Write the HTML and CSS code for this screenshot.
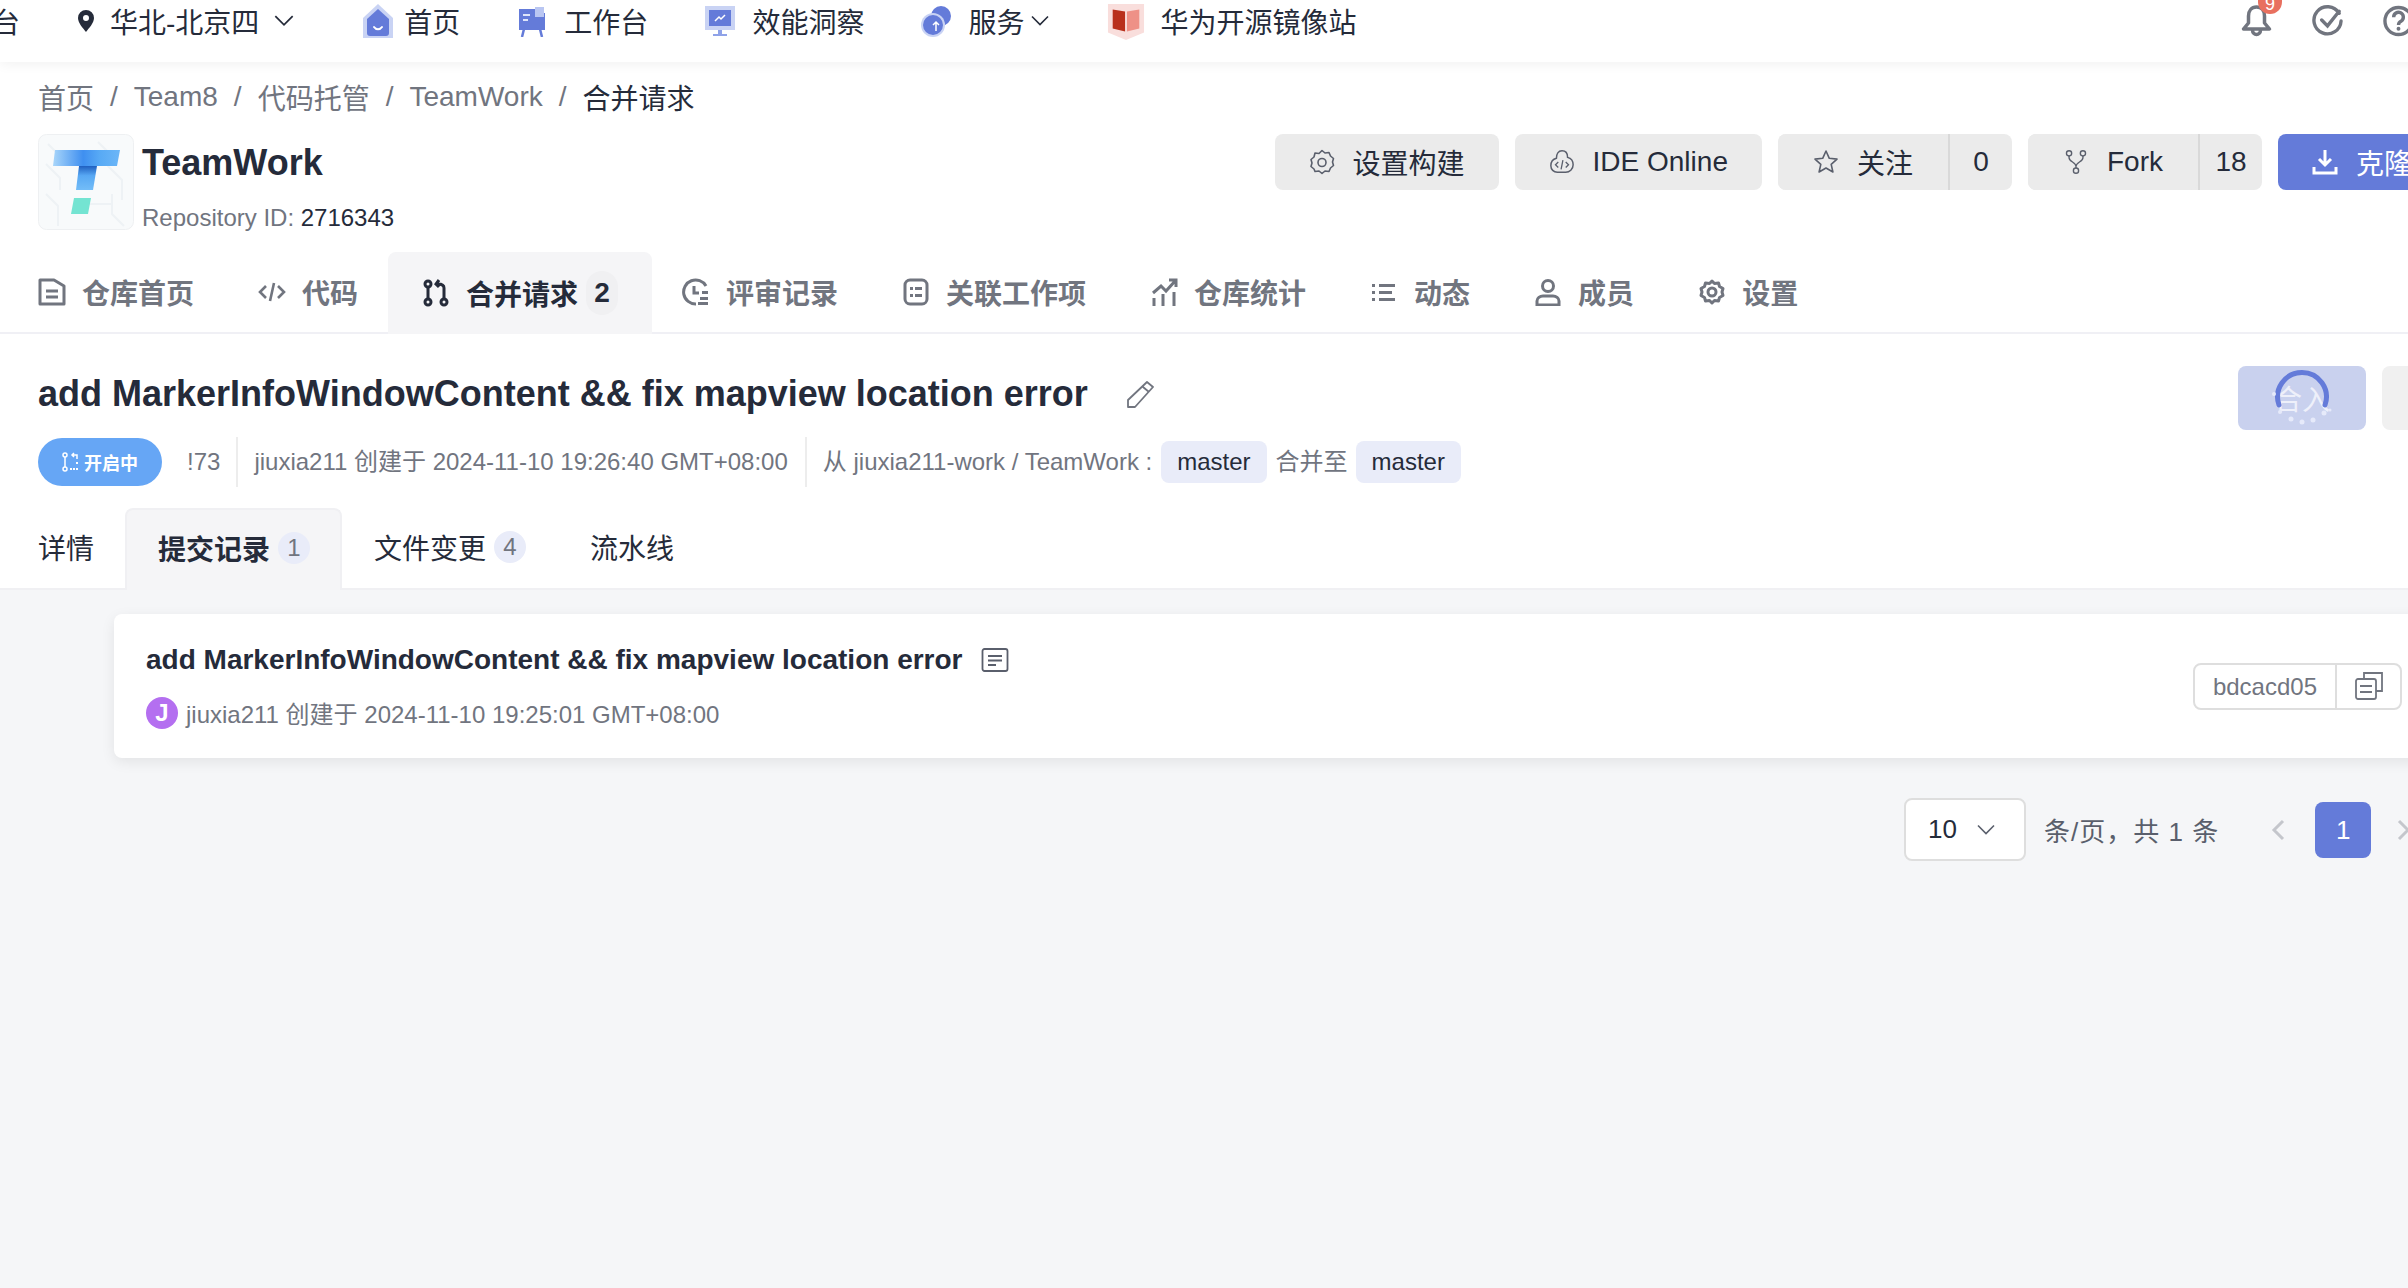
FILE: index.html
```html
<!DOCTYPE html>
<html lang="zh-CN">
<head>
  <meta charset="UTF-8" />
  <title>合并请求</title>
  <link rel="stylesheet" href="styles.css">
</head>
<body>
  <div class="page">
    <header class="topbar">
      <span class="cut-title">台</span>
      <div class="region">
        <svg class="ico-pin" viewBox="0 0 16 22"><path fill="#252b3a" fill-rule="evenodd" d="M8 0a8 8 0 0 1 8 8c0 5-5 10-8 14C5 18 0 13 0 8a8 8 0 0 1 8-8zm0 5a3 3 0 1 0 0 6 3 3 0 0 0 0-6z"/></svg>
        <span>华北-北京四</span>
        <svg class="chev" viewBox="0 0 20 12"><path d="M2 2l8 8 8-8"/></svg>
      </div>
      <a class="nav-item nav-home">
        <svg class="ico-wide" viewBox="0 0 40 36"><path fill="#c9d3f4" d="M20 1l15 14v20H5V15z"/><path fill="#647bd9" d="M20 6l11 10v14a3 3 0 0 1-3 3H12a3 3 0 0 1-3-3V16z"/><path fill="none" stroke="#fff" stroke-width="2" stroke-linecap="round" d="M16 24c2 3 6 3 8 0"/></svg>
        <span>首页</span>
      </a>
      <a class="nav-item">
        <svg class="ico-nav" viewBox="0 0 32 32"><path fill="none" stroke="#647bd9" stroke-width="2.5" d="M8 24l-2 8M24 24l2 8"/><path fill="#647bd9" d="M3 4h16v4h10v17H3z"/><path fill="#b9c6f2" d="M19 2h9v10h-9z"/><path fill="#dfe5fa" d="M7 9h7v2H7zM7 14h5v2H7z"/></svg>
        <span>工作台</span>
      </a>
      <a class="nav-item">
        <svg class="ico-nav" viewBox="0 0 32 32"><path fill="#c9d3f4" d="M1 1h30v24H1z"/><path fill="#647bd9" d="M5 5h22v16H5z"/><path fill="#8fa2e8" d="M14 25h4v4h5v2H9v-2h5z"/><path fill="none" stroke="#fff" stroke-width="1.5" d="M11 16l4-4 2 2 4-4"/></svg>
        <span>效能洞察</span>
      </a>
      <a class="nav-item nav-tight">
        <svg class="ico-nav" viewBox="0 0 32 32"><circle cx="21" cy="11" r="10" fill="#647bd9"/><circle cx="13" cy="20" r="12" fill="#c9d3f4"/><circle cx="13" cy="20" r="10" fill="#647bd9"/><path fill="none" stroke="#fff" stroke-width="1.5" d="M16 26v-9m-3 3l3-3 3 3"/></svg>
        <span>服务</span>
        <svg class="chev" viewBox="0 0 20 12"><path d="M2 2l8 8 8-8"/></svg>
      </a>
      <a class="nav-item nav-book">
        <svg class="ico-wide" viewBox="0 0 40 40"><path fill="#f9dedc" d="M1 2h38v30l-19 8-19-8z"/><path fill="#b9301c" d="M6 8l13 2v21L6 28z"/><path fill="#ee9187" d="M34 8l-13 2v21l13-3z"/></svg>
        <span>华为开源镜像站</span>
      </a>
      <div class="top-icons">
        <span class="bell">
          <svg class="ico-top" viewBox="0 0 30 32"><path fill="none" stroke="#71757f" stroke-width="3.500" stroke-linejoin="round" d="M15 2c5 0 8 4 8 9v7l5 6H2l5-6v-7c0-5 3-9 8-9zM11 25c0 6 8 6 8 0"/></svg>
          <b class="bell-badge">9</b>
        </span>
        <svg class="ico-top" viewBox="0 0 32 32"><path fill="none" stroke="#71757f" stroke-width="3.500" stroke-linecap="round" d="M28 8A14 14 0 1 0 30 16M10 15l6 6L28 6"/></svg>
        <svg class="ico-top" viewBox="0 0 32 32"><circle cx="16" cy="16" r="14" fill="none" stroke="#71757f" stroke-width="3.500"/><path fill="none" stroke="#71757f" stroke-width="3.500" d="M11 12a5 5 0 1 1 8 4c-2 1-3 2-3 4"/><circle cx="16" cy="24" r="2" fill="#71757f"/></svg>
      </div>
    </header>

    <section class="repo-head">
      <nav class="crumbs">
        <a>首页</a><i>/</i><a>Team8</a><i>/</i><a>代码托管</a><i>/</i><a>TeamWork</a><i>/</i><span>合并请求</span>
      </nav>
      <div class="repo-row">
        <svg class="repo-logo" viewBox="0 0 96 96">
          <rect x="0.5" y="0.5" width="95" height="95" rx="8" fill="#f8fafb" stroke="#eef0f2"/>
          <path fill="none" stroke="#eef2f5" stroke-width="2" d="M8 60l12 12v20M8 30l14 14v12M60 8l10 10v14l14 14v20M74 60v20l12 12M50 70h24M10 10l16 16"/>
          <defs>
            <linearGradient id="logoBar" x1="0" x2="1"><stop offset="0" stop-color="#a9d6fa"/><stop offset="0.45" stop-color="#3f8ff0"/><stop offset="0.7" stop-color="#58aaf5"/><stop offset="1" stop-color="#6cb6f7"/></linearGradient>
            <linearGradient id="logoStem" x1="0" x2="0" y1="0" y2="1"><stop offset="0" stop-color="#1f5fc0"/><stop offset="0.4" stop-color="#58a8f3"/><stop offset="1" stop-color="#73bdf8"/></linearGradient>
          </defs>
          <path fill="url(#logoBar)" d="M17 16h65l-3 16H15z"/>
          <path fill="url(#logoStem)" d="M41 32h18l-4 24H38z"/>
          <path fill="#74e4d2" d="M36 64h17l-3 16H33z"/>
        </svg>
        <div class="repo-info">
          <h1>TeamWork</h1>
          <p>Repository ID: <b>2716343</b></p>
        </div>
        <div class="repo-actions">
          <button class="btn">
            <svg class="ico-btn" viewBox="0 0 26 26"><path fill="none" stroke="#5a5f6c" stroke-width="1.6" stroke-linejoin="round" d="M13 1.5l3 2.5 4-.5 1.5 3.500 3 2.500-1 3.500 1 3.500-3 2.500-1.500 3.500-4-.5-3 2.500-3-2.500-4 .5L5 20l-3-2.500 1-3.500-1-3.500L5 8l1-4 4 .5z"/><circle cx="13" cy="13.500" r="4" fill="none" stroke="#5a5f6c" stroke-width="1.600"/></svg>
            设置构建
          </button>
          <button class="btn">
            <svg class="ico-btn" viewBox="0 0 28 28"><path fill="none" stroke="#5a5f6c" stroke-width="1.600" d="M14 2c4 0 6 3 6 7 4 1 6 4 6 8 0 5-4 8-8 8H9c-4 0-7-3-7-7 0-4 2-7 6-8 0-5 2-8 6-8z"/><path fill="none" stroke="#5a5f6c" stroke-width="1.400" d="M10 14l-3 3 3 3M18 14l3 3-3 3M15 12l-2 10"/></svg>
            IDE Online
          </button>
          <div class="btn-count">
            <button class="btn">
              <svg class="ico-btn" viewBox="0 0 26 26"><path fill="none" stroke="#5a5f6c" stroke-width="1.600" stroke-linejoin="round" d="M13 2l3.300 7.300 7.700.8-5.800 5.200 1.700 7.700-6.900-4-6.900 4 1.700-7.700L2 10.100l7.700-.8z"/></svg>
              关注
            </button>
            <span>0</span>
          </div>
          <div class="btn-count">
            <button class="btn">
              <svg class="ico-btn" viewBox="0 0 26 30"><g fill="none" stroke="#5a5f6c" stroke-width="1.600"><circle cx="5" cy="5" r="3"/><circle cx="21" cy="5" r="3"/><circle cx="13" cy="25" r="3"/><path d="M5 8v2c0 5 8 5 8 10v2M21 8v2c0 5-8 5-8 10"/></g></svg>
              Fork
            </button>
            <span>18</span>
          </div>
          <button class="btn btn-primary">
            <svg class="ico-btn" viewBox="0 0 26 26"><path fill="none" stroke="#fff" stroke-width="3" d="M13 1v15M7 10l6 6 6-6M2 18v6h22v-6"/></svg>
            克隆
          </button>
        </div>
      </div>
      <div class="main-tabs">
        <a class="tab">
          <svg class="ico-tab" viewBox="0 0 28 28"><g fill="none" stroke="#71757f" stroke-width="3"><path d="M2 2h14l10 6v18H2z" stroke-linejoin="round"/><path d="M8 13h12M8 19h12"/></g></svg>
          仓库首页
        </a>
        <a class="tab">
          <svg class="ico-tab" viewBox="0 0 28 28"><path fill="none" stroke="#71757f" stroke-width="2.600" d="M8 8l-6 6 6 6M20 8l6 6-6 6M16 5l-4 18"/></svg>
          代码
        </a>
        <a class="tab tab-on">
          <svg class="ico-tab" viewBox="0 0 28 28"><g fill="none" stroke="#252b3a" stroke-width="3"><circle cx="6" cy="5" r="3"/><circle cx="6" cy="23" r="3"/><circle cx="22" cy="23" r="3"/><path d="M6 8v12M22 20V9c0-3-2-4-6-4M17 1l-3 4 3 3"/></g></svg>
          合并请求
          <b class="tab-badge">2</b>
        </a>
        <a class="tab">
          <svg class="ico-tab" viewBox="0 0 28 28"><g fill="none" stroke="#71757f" stroke-width="3"><path d="M24 8A12 12 0 1 0 14 26"/><path d="M12 8v7h5"/></g><path fill="#71757f" d="M20 13h6v3h-6zM18 19h8v3h-8zM16 24h10v3H16z"/></svg>
          评审记录
        </a>
        <a class="tab">
          <svg class="ico-tab" viewBox="0 0 28 28"><rect x="3" y="2" width="22" height="24" rx="5" fill="none" stroke="#71757f" stroke-width="3"/><path fill="#71757f" d="M8 9h3v3H8zM13 9h7v3h-7zM8 16h3v3H8zM13 16h7v3h-7z"/></svg>
          关联工作项
        </a>
        <a class="tab">
          <svg class="ico-tab" viewBox="0 0 28 28"><path fill="none" stroke="#71757f" stroke-width="3" d="M3 15l8-7 5 5L26 2M19 2h7v7M4 20v8M13 16v12M24 14v14"/></svg>
          仓库统计
        </a>
        <a class="tab">
          <svg class="ico-tab" viewBox="0 0 26 28"><path fill="#71757f" d="M1 6h3v3H1zM1 13h3v3H1zM1 20h3v3H1zM8 6h16v3H8zM8 13h13v3H8zM8 20h16v3H8z"/></svg>
          动态
        </a>
        <a class="tab">
          <svg class="ico-tab" viewBox="0 0 28 28"><g fill="none" stroke="#71757f" stroke-width="3"><circle cx="14" cy="8" r="5.500"/><path d="M3 27v-4c0-3 3-5 6-5h10c3 0 6 2 6 5v4H3z"/></g></svg>
          成员
        </a>
        <a class="tab">
          <svg class="ico-tab" viewBox="0 0 26 28"><path fill="none" stroke="#71757f" stroke-width="3" stroke-linejoin="round" d="M13 3l2.500 2.500 4-.5 1 3.500 3.500 2-1 3.500 1 3.500-3.500 2-1 3.500-4-.5L13 25l-2.500-2.500-4 .5-1-3.500-3.500-2 1-3.500-1-3.500 3.500-2 1-3.500 4 .5z"/><circle cx="13" cy="14" r="4" fill="none" stroke="#71757f" stroke-width="3"/></svg>
          设置
        </a>
      </div>
    </section>

    <section class="mr-head">
      <div class="mr-title-row">
        <h2>add MarkerInfoWindowContent &amp;&amp; fix mapview location error</h2>
        <svg class="ico-edit" viewBox="0 0 28 28"><path fill="none" stroke="#71757f" stroke-width="1.800" stroke-linejoin="round" d="M21 2l6 5L9 27H2v-7zM17 7l6 5"/></svg>
        <div class="mr-actions">
          <button class="btn-merge">合入
            <svg class="spinner" viewBox="0 0 64 64">
              <path fill="none" stroke="#647bd9" stroke-width="5" stroke-linecap="round" d="M9 40A24.400 24.400 0 1 1 55 40"/>
              <g fill="#e6eafa"><circle cx="4" cy="29" r="2"/><circle cx="10" cy="47" r="2"/><circle cx="21" cy="54" r="2.500"/><circle cx="32" cy="57" r="2.500"/><circle cx="43" cy="55" r="2.500"/><circle cx="54" cy="48" r="2.500"/><circle cx="60" cy="45" r="1.500"/></g>
            </svg>
          </button>
          <button class="btn-close"></button>
        </div>
      </div>
      <div class="mr-meta">
        <span class="status">
          <svg class="ico-status" viewBox="0 0 18 20"><g fill="none" stroke="#fff" stroke-width="1.500"><circle cx="3" cy="3" r="2"/><circle cx="3" cy="17" r="2"/><path d="M3 5v10M15 7V3h-4M12 1l-2 2 2 2"/></g><path fill="#fff" d="M8 16h2v2H8zM11 16h2v2h-2zM14 16h2v2h-2zM14 10h2v2h-2z"/></svg>
          开启中
        </span>
        <span class="mr-id">!73</span>
        <span class="mr-by">jiuxia211 创建于 2024-11-10 19:26:40 GMT+08:00</span>
        <span class="mr-from">从 jiuxia211-work / TeamWork :</span>
        <span class="chip">master</span>
        <span class="mr-into">合并至</span>
        <span class="chip">master</span>
      </div>
      <div class="sub-tabs">
        <a class="sub-tab">详情</a>
        <a class="sub-tab sub-on">提交记录 <b class="sub-badge">1</b></a>
        <a class="sub-tab">文件变更 <b class="sub-badge">4</b></a>
        <a class="sub-tab">流水线</a>
      </div>
    </section>

    <main class="commits">
      <article class="commit-card">
        <div>
          <div class="commit-title">
            add MarkerInfoWindowContent &amp;&amp; fix mapview location error
            <svg class="ico-note" viewBox="0 0 28 28"><g fill="none" stroke="#5a5f6c" stroke-width="1.800"><rect x="1.500" y="3" width="25" height="22" rx="2"/><path d="M7 10h14M7 14.500h14M7 19h8"/></g></svg>
          </div>
          <div class="commit-meta">
            <span class="avatar">J</span>
            jiuxia211 创建于 2024-11-10 19:25:01 GMT+08:00
          </div>
        </div>
        <div class="hash">
          <span>bdcacd05</span>
          <button>
            <svg viewBox="0 0 28 28"><g fill="none" stroke="#71757f" stroke-width="1.800"><path d="M9 7V1h18v18h-6"/><rect x="1" y="7" width="20" height="20" rx="2"/><path d="M5 14h12M5 20h12"/></g></svg>
          </button>
        </div>
      </article>
      <div class="pager">
        <div class="page-size">10
          <svg class="chev chev-soft" viewBox="0 0 20 12"><path d="M2 2l8 8 8-8"/></svg>
        </div>
        <span class="page-total">条/页，共 1 条</span>
        <svg class="page-arrow" viewBox="0 0 14 24"><path d="M12 3L3 12l9 9"/></svg>
        <b class="page-no">1</b>
        <svg class="page-arrow" viewBox="0 0 14 24"><path d="M2 3l9 9-9 9"/></svg>
      </div>
    </main>
  </div>
</body>
</html>
```

FILE: styles.css
```css
* {
  box-sizing: border-box;
}

html, body {
  margin: 0;
  height: 100%;
  overflow: hidden;
  background: #f5f6f8;
}

body {
  font-family: "Liberation Sans", "Noto Sans CJK SC", sans-serif;
  color: #252b3a;
}

button {
  font: inherit;
  border: none;
  color: inherit;
}

.page {
  width: 2478px;
}

/* top bar */
.topbar {
  position: relative;
  z-index: 2;
  display: flex;
  align-items: center;
  height: 62px;
  padding-right: 64px;
  padding-bottom: 21px;
  background: white;
  box-shadow: 0 2px 12px rgba(0, 0, 0, 0.06);
  font-size: 28px;
  white-space: nowrap;
}

.cut-title {
  margin-left: -8px;
  margin-right: 58px;
}

.region, .nav-item {
  display: flex;
  align-items: center;
}

.region {
  margin-right: 53px;
}

.ico-pin {
  width: 16px;
  height: 22px;
  margin-right: 16px;
}

.chev {
  width: 22px;
  height: 13px;
  margin-left: 14px;
  fill: none;
  stroke: #252b3a;
  stroke-width: 1.6;
}

.nav-item {
  gap: 16px;
  margin-right: 56px;
}

.nav-home {
  gap: 6px;
  margin-left: 10px;
}

.nav-tight .chev {
  margin-left: -10px;
  width: 20px;
}

.nav-book {
  gap: 14px;
}

.ico-nav {
  width: 32px;
  height: 32px;
}

.ico-wide {
  width: 40px;
  height: 38px;
}

.top-icons {
  display: flex;
  align-items: center;
  gap: 40px;
  margin-left: auto;
}

.bell {
  position: relative;
  display: flex;
}

.ico-top {
  width: 31px;
  height: 32px;
}

.bell-badge {
  position: absolute;
  top: -25px;
  left: 17px;
  width: 24px;
  height: 34px;
  border-radius: 12px;
  background: #e8705f;
  color: white;
  font-size: 18px;
  font-weight: normal;
  line-height: 48px;
  text-align: center;
}

/* repo header */
.repo-head {
  background: white;
}

.crumbs {
  display: flex;
  align-items: center;
  height: 72px;
  padding: 0 0 2px 38px;
  font-size: 28px;
  color: #71757f;
}

.crumbs i {
  font-style: normal;
  margin: 0 16px;
}

.crumbs span {
  color: #252b3a;
}

.repo-row {
  display: flex;
  height: 96px;
  padding: 0 32px 0 38px;
}

.repo-logo {
  width: 96px;
  height: 96px;
  flex-shrink: 0;
}

.repo-info {
  margin-left: 8px;
}

.repo-info h1 {
  margin: 8px 0 0;
  font-size: 36px;
  line-height: 42px;
}

.repo-info p {
  margin: 19px 0 0;
  font-size: 24px;
  line-height: 30px;
  color: #71757f;
}

.repo-info b {
  font-weight: normal;
  color: #252b3a;
}

.repo-actions {
  display: flex;
  align-items: flex-start;
  gap: 16px;
  margin-left: auto;
}

.btn {
  display: flex;
  align-items: center;
  gap: 18px;
  height: 56px;
  padding: 0 34px;
  border-radius: 8px;
  background: #ebebeb;
  font-size: 28px;
}

.ico-btn {
  width: 26px;
  height: 26px;
}

.btn-count {
  display: flex;
  align-items: center;
  height: 56px;
  border-radius: 8px;
  background: #ebebeb;
  font-size: 28px;
}

.btn-count .btn {
  padding: 0 35px;
}

.btn-count span {
  width: 64px;
  line-height: 56px;
  border-left: 2px solid #d9d9d9;
  text-align: center;
}

.btn-primary {
  background: #647bd9;
  color: white;
}

.main-tabs {
  display: flex;
  height: 82px;
  margin-top: 22px;
  padding-left: 6px;
  border-bottom: 2px solid #f0f0f5;
}

.tab {
  display: flex;
  align-items: center;
  gap: 16px;
  padding: 0 32px;
  font-size: 28px;
  font-weight: 600;
  color: #71757f;
}

.ico-tab {
  width: 28px;
  height: 28px;
}

.tab-on {
  margin: 0 -2px 0 -2px;
  padding: 0 34px;
  border-radius: 8px 8px 0 0;
  background: #f5f5f7;
  color: #252b3a;
  font-weight: 700;
  height: 82px;
}

.tab-badge {
  width: 32px;
  margin-left: -8px;
  line-height: 44px;
  border-radius: 16px;
  background: #f0f0f2;
  text-align: center;
}

/* merge request header */
.mr-head {
  padding-top: 32px;
  background: white;
}

.mr-title-row {
  display: flex;
  height: 64px;
  padding: 0 38px;
}

.mr-title-row h2 {
  margin: 1px 0 0;
  font-size: 36px;
  line-height: 54px;
}

.ico-edit {
  width: 28px;
  height: 28px;
  margin: 14px 0 0 38px;
}

.mr-actions {
  display: flex;
  gap: 16px;
  margin-left: auto;
}

.btn-merge {
  position: relative;
  width: 128px;
  height: 64px;
  border-radius: 8px;
  background: #c9d1ee;
  color: #eef0fa;
  font-size: 28px;
}

.spinner {
  position: absolute;
  left: 32px;
  top: -1px;
  width: 64px;
  height: 64px;
}

.btn-close {
  width: 58px;
  height: 64px;
  border-radius: 8px;
  background: #f0f0f0;
}

.mr-meta {
  display: flex;
  align-items: center;
  height: 50px;
  margin-top: 7px;
  padding-left: 38px;
  font-size: 24px;
  color: #71757f;
  white-space: nowrap;
}

.status {
  display: flex;
  align-items: center;
  gap: 4px;
  height: 48px;
  padding: 0 24px;
  border-radius: 24px;
  background: #66a6f5;
  color: white;
  font-size: 18px;
  font-weight: 700;
}

.ico-status {
  width: 18px;
  height: 20px;
}

.mr-id {
  margin-left: 25px;
  padding-right: 16px;
}

.mr-by, .mr-from {
  height: 50px;
  line-height: 50px;
  padding: 0 17px 0 16px;
  border-left: 2px solid #ededed;
}

.mr-from {
  padding-right: 0;
}

.chip {
  height: 42px;
  margin-left: 9px;
  padding: 0 16px;
  border-radius: 8px;
  background: #e9ecf9;
  color: #252b3a;
  line-height: 42px;
}

.mr-into {
  margin-left: 9px;
  margin-right: -1px;
  line-height: 42px;
  height: 42px;
}

.sub-tabs {
  display: flex;
  height: 82px;
  margin-top: 21px;
  padding-left: 6px;
  border-bottom: 2px solid #f0f0f3;
}

.sub-tab {
  display: flex;
  align-items: center;
  gap: 8px;
  padding: 0 32px 2px;
  font-size: 28px;
}

.sub-on {
  height: 82px;
  margin-left: -1px;
  padding: 0 30px 4px 31px;
  border: 2px solid #f0f0f3;
  border-bottom: none;
  border-radius: 8px 8px 0 0;
  background: #f5f5f7;
  font-weight: 600;
}

.sub-badge {
  width: 32px;
  line-height: 32px;
  border-radius: 16px;
  background: #e9ecf9;
  color: #71757f;
  font-size: 24px;
  font-weight: normal;
  text-align: center;
}

/* commit list */
.commits {
  padding: 24px 0 0 114px;
}

.commit-card {
  display: flex;
  justify-content: space-between;
  align-items: center;
  height: 144px;
  margin-right: 38px;
  padding: 0 38px 0 32px;
  border-radius: 8px;
  background: white;
  box-shadow: 0 4px 14px rgba(0, 0, 0, 0.08);
}

.commit-title {
  display: flex;
  align-items: center;
  gap: 18px;
  font-size: 28px;
  font-weight: 700;
  line-height: 36px;
}

.ico-note {
  width: 28px;
  height: 28px;
}

.commit-meta {
  display: flex;
  align-items: center;
  gap: 8px;
  margin-top: 17px;
  font-size: 24px;
  color: #71757f;
}

.avatar {
  width: 32px;
  height: 32px;
  border-radius: 50%;
  background: #b46ff0;
  color: white;
  font-weight: 700;
  line-height: 32px;
  text-align: center;
}

.hash {
  display: flex;
  height: 47px;
  border: 2px solid #dedede;
  border-radius: 8px;
  font-size: 24px;
  color: #71757f;
}

.hash span {
  padding: 0 18px;
  line-height: 43px;
  border-right: 2px solid #dedede;
}

.hash button {
  width: 63px;
  padding: 0;
  background: none;
}

.hash svg {
  display: block;
  width: 28px;
  height: 28px;
  margin: 0 auto;
}

.pager {
  display: flex;
  align-items: center;
  height: 63px;
  margin-top: 40px;
  padding-left: 1790px;
}

.page-size {
  display: flex;
  align-items: center;
  justify-content: space-between;
  width: 122px;
  height: 63px;
  padding: 0 28px 0 22px;
  border: 2px solid #dedede;
  border-radius: 8px;
  background: white;
  font-size: 26px;
}

.chev-soft {
  width: 20px;
  stroke: #5a5f6c;
}

.page-total {
  margin-left: 18px;
  font-size: 26px;
  letter-spacing: 1px;
  color: #5a5f6c;
  white-space: nowrap;
}

.page-arrow {
  flex-shrink: 0;
  width: 14px;
  height: 24px;
  margin: 0 30px 0 52px;
  fill: none;
  stroke: #c4c6cc;
  stroke-width: 3;
}

.page-no + .page-arrow {
  margin-left: 26px;
}

.page-no {
  flex-shrink: 0;
  width: 56px;
  line-height: 56px;
  border-radius: 8px;
  background: #647bd9;
  color: white;
  font-size: 26px;
  font-weight: normal;
  text-align: center;
}
```
